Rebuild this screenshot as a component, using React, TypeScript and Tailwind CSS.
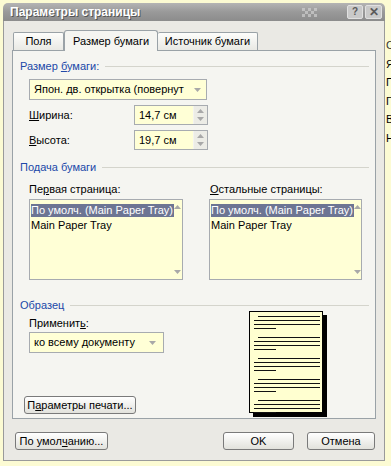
import React from "react";

const font = { fontFamily: '"Liberation Sans", Arial, sans-serif' };

function Header({ text }: { text: React.ReactNode }) {
  return (
    <div className="flex items-center h-[14px] pl-[7px] pr-[6px]">
      <span className="text-[#2048a8] text-[11px] leading-[14px] whitespace-nowrap">{text}</span>
      <div className="flex-1 ml-[6px] border-t border-[#d4d4cc] h-0" />
    </div>
  );
}

function Arrow({ dir }: { dir: "up" | "down" }) {
  return (
    <svg width="7" height="4" viewBox="0 0 7 4">
      {dir === "up" ? (
        <path d="M0 4 L3.5 0 L7 4 Z" fill="#a8a8a8" />
      ) : (
        <path d="M0 0 L3.5 4 L7 0 Z" fill="#a8a8a8" />
      )}
    </svg>
  );
}

function Spin({ value }: { value: string }) {
  return (
    <div className="flex w-[74px] h-[20px] border border-[#a7abb0] bg-[#ffffd6]">
      <div className="flex-1 flex items-center pl-[4px] text-[11px]">{value}</div>
      <div className="w-[14px] bg-[#ecece6] flex flex-col items-center justify-center gap-[4px] border-l border-[#f4f4ef]">
        <Arrow dir="up" />
        <Arrow dir="down" />
      </div>
    </div>
  );
}

function ListBox() {
  return (
    <div className="flex h-[81px] border border-[#a7abb0] bg-[#ffffd6]">
      <div className="flex-1 pt-[2px] pl-[1px]">
        <div className="bg-[#6d7593] text-white text-[11px] leading-[12px] h-[13px] whitespace-nowrap inline-block pr-[1px]">
          По умолч. (Main Paper Tray)
        </div>
        <div className="text-[11px] leading-[13px] whitespace-nowrap">Main Paper Tray</div>
      </div>
      <div className="w-[11px] flex flex-col items-center justify-between py-[5px]">
        <Arrow dir="up" />
        <Arrow dir="down" />
      </div>
    </div>
  );
}

function Button({ children, w }: { children: React.ReactNode; w: string }) {
  return (
    <div
      className={`${w} h-[18px] border border-[#7a7a7a] rounded-[3px] bg-gradient-to-b from-[#ffffff] to-[#e2e2dc] flex items-center justify-center text-[11px] whitespace-nowrap`}
    >
      {children}
    </div>
  );
}

function Page() {
  const groups = [0, 1, 2, 3, 4];
  return (
    <div className="w-[74px] h-[102px] bg-[#ffffd0] border border-black shadow-[4px_4px_0_#000] pt-[4px] pl-[4px] pr-[2px] flex flex-col gap-[8px]">
      {groups.map((g) => (
        <div key={g} className="flex flex-col gap-[3px]">
          <div className="h-px bg-[#111] ml-[4px]" />
          <div className="h-px bg-[#111]" />
          <div className="h-px bg-[#111]" />
          <div className="h-px bg-[#111] w-[22px]" />
        </div>
      ))}
    </div>
  );
}

export default function App() {
  return (
    <div className="w-[391px] h-[466px] bg-[#fcfbd3] flex pt-[3px] pl-[3px] overflow-hidden" style={font}>
      <div className="w-[382px] h-[458px] flex flex-col">
        {/* Title bar */}
        <div className="h-[18px] rounded-t-[5px] bg-gradient-to-b from-[#b4b4b4] via-[#999999] to-[#8c8c8c] flex items-center pl-[7px] pr-[3px]">
          <span className="text-white font-bold text-[12px] leading-[14px] [text-shadow:1px_1px_0_#555]">
            Параметры страницы
          </span>
          <div className="flex-1 flex justify-end pr-[30px]">
            <div className="grid grid-cols-5 gap-0 opacity-60">
              {Array.from({ length: 15 }).map((_, i) => (
                <div key={i} className={`w-[3px] h-[3px] ${i % 2 === 0 ? "bg-[#d8d8d8]" : "bg-transparent"}`} />
              ))}
            </div>
          </div>
          <div className="flex gap-[2px]">
            <div className="w-[16px] h-[14px] border border-[#e0e0e0] rounded-[2px] bg-[#c9c9c9] flex items-center justify-center text-[10px] font-bold text-[#5a5a5a] leading-none">
              ?
            </div>
            <div className="w-[17px] h-[14px] border border-[#e0e0e0] rounded-[2px] bg-[#c9c9c9] flex items-center justify-center text-[12px] font-bold text-[#5a5a5a] leading-none">
              ✕
            </div>
          </div>
        </div>
        {/* Body */}
        <div className="flex-1 bg-[#eae9e4] border-x border-b border-[#9a9a9a] px-[8px] pt-[8px] flex flex-col">
          {/* Tabs */}
          <div className="flex items-end h-[21px] pl-[1px] text-[11px]">
            <div className="w-[51px] h-[18px] border border-b-0 border-[#9aa2a7] rounded-t-[2px] bg-gradient-to-b from-[#fdfdfb] to-[#e9e9e4] flex items-center justify-center">
              Поля
            </div>
            <div className="w-[94px] h-[21px] border border-b-0 border-[#9aa2a7] rounded-t-[3px] bg-[#f5f5f1] flex items-center justify-center relative top-px">
              Размер бумаги
            </div>
            <div className="w-[100px] h-[18px] border border-b-0 border-l-0 border-[#9aa2a7] rounded-t-[2px] bg-gradient-to-b from-[#fdfdfb] to-[#e9e9e4] flex items-center justify-center">
              Источник бумаги
            </div>
          </div>
          {/* Panel */}
          <div className="w-[364px] h-[369px] border border-[#9aa2a7] bg-[#f5f5f1] flex flex-col text-[11px] text-black">
            <div className="mt-[8px]">
              <Header text={<>Размер <u>б</u>умаги:</>} />
            </div>
            <div className="mt-[6px] ml-[16px] w-[178px] h-[21px] border border-[#a7abb0] bg-[#ffffd6] flex items-center pl-[4px] pr-[5px]">
              <span className="w-[158px] whitespace-nowrap overflow-hidden">Япон. дв. открытка (повернут</span>
              <span className="ml-[3px]"><Arrow dir="down" /></span>
            </div>
            <div className="mt-[5px] ml-[16px] flex items-center">
              <span className="w-[105px]"><u>Ш</u>ирина:</span>
              <Spin value="14,7 см" />
            </div>
            <div className="mt-[5px] ml-[16px] flex items-center">
              <span className="w-[105px]"><u>В</u>ысота:</span>
              <Spin value="19,7 см" />
            </div>
            <div className="mt-[10px]">
              <Header text="Подача бумаги" />
            </div>
            <div className="mt-[8px] ml-[16px] flex h-[14px] items-center">
              <span className="w-[181px]">Пе<u>р</u>вая страница:</span>
              <span><u>О</u>стальные страницы:</span>
            </div>
            <div className="mt-[3px] ml-[16px] flex">
              <div className="w-[154px]"><ListBox /></div>
              <div className="w-[26px]" />
              <div className="w-[153px]"><ListBox /></div>
            </div>
            <div className="mt-[18px]">
              <Header text="Образец" />
            </div>
            <div className="flex">
              <div className="flex flex-col">
                <div className="mt-[4px] ml-[16px] h-[14px] flex items-center">
                  Применит<u>ь</u>:
                </div>
                <div className="mt-[2px] ml-[16px] w-[135px] h-[21px] border border-[#a7abb0] bg-[#ffffd6] flex items-center pl-[4px] pr-[7px]">
                  <span className="flex-1">ко всему документу</span>
                  <Arrow dir="down" />
                </div>
                <div className="mt-[43px] ml-[11px]">
                  <Button w="w-[112px]">
                    П<u>а</u>раметры печати...
                  </Button>
                </div>
              </div>
              <div className="ml-[85px] -mt-[1px]">
                <Page />
              </div>
            </div>
          </div>
          {/* Bottom buttons */}
          <div className="mt-[13px] flex items-center">
            <div className="ml-[3px]">
              <Button w="w-[93px]">
                По умол<u>ч</u>анию...
              </Button>
            </div>
            <div className="ml-[115px]">
              <Button w="w-[71px]">OK</Button>
            </div>
            <div className="ml-[13px]">
              <Button w="w-[68px]">Отмена</Button>
            </div>
          </div>
        </div>
      </div>
      <div className="w-[6px] overflow-hidden pt-[33px] pl-[1px] text-[11px] leading-[18.5px] text-black">
        <div className="text-[#333]">С</div>
        <div>Я</div>
        <div>П</div>
        <div>Г</div>
        <div>В</div>
        <div>Н</div>
      </div>
    </div>
  );
}
